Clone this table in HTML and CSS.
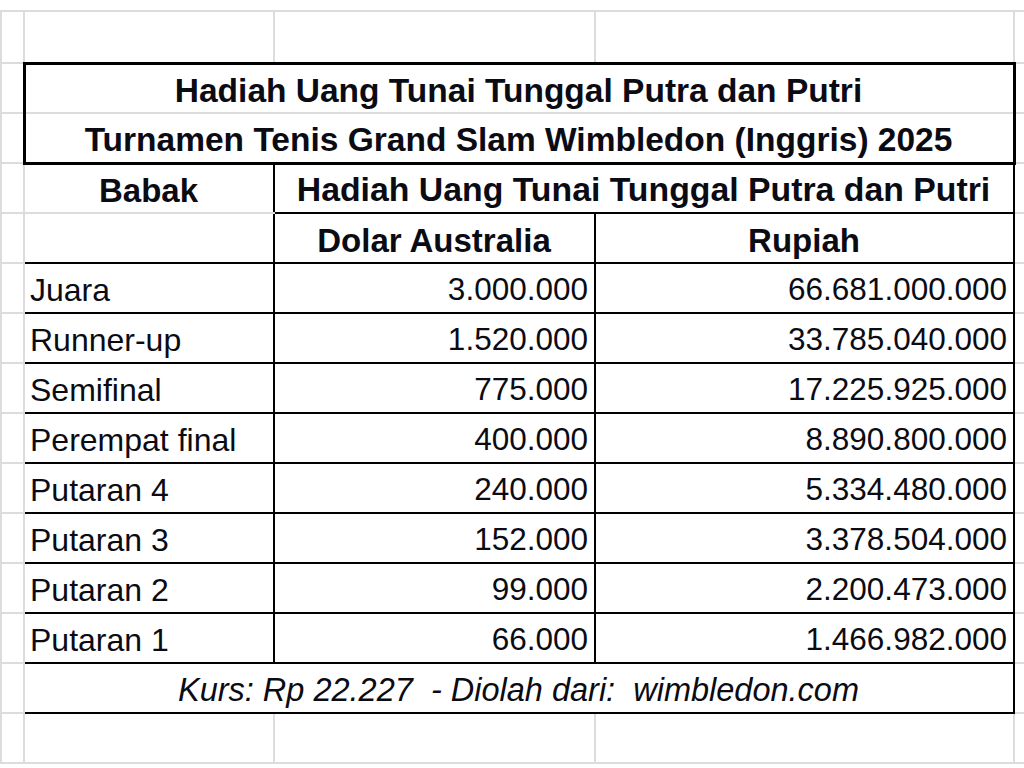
FILE: index.html
```html
<!DOCTYPE html>
<html lang="id">
<head>
<meta charset="utf-8">
<title>Hadiah Uang Tunai Wimbledon 2025</title>
<link rel="stylesheet" href="styles.css">
</head>
<body>
<table class="sheet">
  <colgroup>
    <col class="c-a"><col class="c-b"><col class="c-c"><col class="c-d"><col class="c-e">
  </colgroup>
  <tr class="r-top"><td class="blank"></td><td class="blank"></td><td class="blank"></td><td class="blank"></td><td class="blank"></td></tr>
  <tr class="r-first"><td></td><td></td><td></td><td></td><td></td></tr>
  <tr class="r">
    <td></td>
    <td colspan="3" class="title t1">Hadiah Uang Tunai Tunggal Putra dan Putri</td>
    <td></td>
  </tr>
  <tr class="r">
    <td></td>
    <td colspan="3" class="title t2">Turnamen Tenis Grand Slam Wimbledon (Inggris) 2025</td>
    <td></td>
  </tr>
  <tr class="r">
    <td></td>
    <td class="head b-l b-r b-top">Babak</td>
    <td colspan="2" class="head head-wide b-r b-bot">Hadiah Uang Tunai Tunggal Putra dan Putri</td>
    <td></td>
  </tr>
  <tr class="r">
    <td></td>
    <td class="b-l b-r b-bot"></td>
    <td class="head b-r b-bot">Dolar Australia</td>
    <td class="head b-r b-bot">Rupiah</td>
    <td></td>
  </tr>
  <tr class="r"><td></td><td class="lbl">Juara</td><td class="num">3.000.000</td><td class="num">66.681.000.000</td><td></td></tr>
  <tr class="r"><td></td><td class="lbl">Runner-up</td><td class="num">1.520.000</td><td class="num">33.785.040.000</td><td></td></tr>
  <tr class="r"><td></td><td class="lbl">Semifinal</td><td class="num">775.000</td><td class="num">17.225.925.000</td><td></td></tr>
  <tr class="r"><td></td><td class="lbl">Perempat final</td><td class="num">400.000</td><td class="num">8.890.800.000</td><td></td></tr>
  <tr class="r"><td></td><td class="lbl">Putaran 4</td><td class="num">240.000</td><td class="num">5.334.480.000</td><td></td></tr>
  <tr class="r"><td></td><td class="lbl">Putaran 3</td><td class="num">152.000</td><td class="num">3.378.504.000</td><td></td></tr>
  <tr class="r"><td></td><td class="lbl">Putaran 2</td><td class="num">99.000</td><td class="num">2.200.473.000</td><td></td></tr>
  <tr class="r"><td></td><td class="lbl">Putaran 1</td><td class="num">66.000</td><td class="num">1.466.982.000</td><td></td></tr>
  <tr class="r">
    <td></td>
    <td colspan="3" class="foot">Kurs: Rp 22.227  - Diolah dari:  wimbledon.com</td>
    <td></td>
  </tr>
  <tr class="r"><td></td><td></td><td></td><td></td><td></td></tr>
</table>
</body>
</html>
```

FILE: styles.css
```css
html, body {
  margin: 0;
  padding: 0;
  background: #ffffff;
}

body {
  width: 1024px;
  height: 768px;
  overflow: hidden;
  font-family: "Liberation Sans", Arial, sans-serif;
  color: #0b0b14;
}

.sheet {
  border-collapse: collapse;
  table-layout: fixed;
  width: 1024px;
  font-size: 31.5px;
}

.c-a { width: 23px; }
.c-b { width: 250px; }
.c-c { width: 321px; }
.c-d { width: 419px; }
.c-e { width: 11px; }

.sheet td {
  border: 2px solid #dcdcdc;
  padding: 4px 7px 0 6px;
  white-space: pre;
  line-height: 1;
  vertical-align: middle;
  overflow: hidden;
}

.r-top { height: 11px; }
.r-top td.blank {
  border-top: none;
  border-left: none;
  border-right: none;
}

.r-first { height: 52px; }

.r { height: 50px; }

.title {
  font-weight: bold;
  font-size: 33.5px;
  text-align: center;
  border-left: 3px solid #000 !important;
  border-right: 3px solid #000 !important;
}
.t1 { border-top: 3px solid #000 !important; }
.t2 { border-bottom: 3px solid #000 !important; }

.head {
  font-weight: bold;
  font-size: 33px;
  text-align: center;
}

.head-wide { font-size: 33.8px; }

.b-l { border-left: 2px solid #000 !important; }
.b-r { border-right: 2px solid #000 !important; }
.b-bot { border-bottom: 2px solid #000 !important; }
.b-top { border-top: 3px solid #000 !important; }

.lbl {
  font-size: 32px;
  text-align: left;
  border: 2px solid #000 !important;
  padding-left: 5px !important;
}

.num {
  text-align: right;
  border: 2px solid #000 !important;
  padding-right: 6px !important;
}

.foot {
  font-style: italic;
  font-size: 32.5px;
  text-align: center;
  border: 2px solid #000 !important;
}
```
